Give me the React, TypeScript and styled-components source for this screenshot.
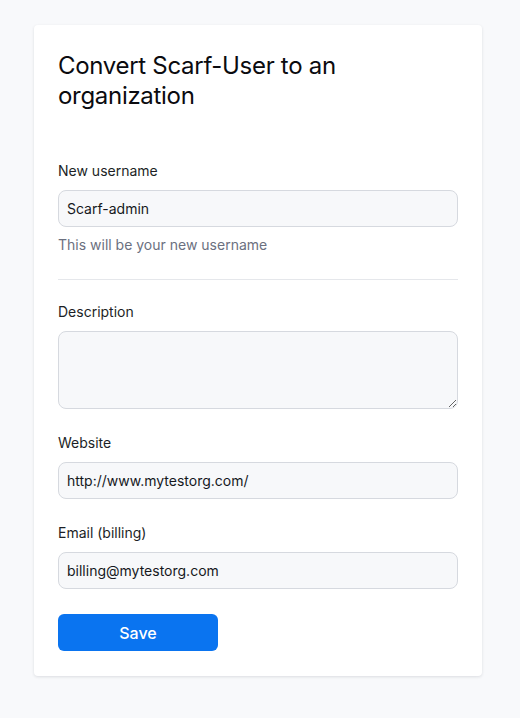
import React from "react";
import styled, {createGlobalStyle} from "styled-components";

const GlobalStyle = createGlobalStyle`
  html, body {
    margin: 0;
    padding: 0;
    background: #f8f9fb;
    font-family: Inter, "Noto Sans", sans-serif;
    color: #111827;
  }
  * {
    box-sizing: border-box;
  }
`;

const Page = styled.div`
  padding: 25px 38px 42px 34px;
`;

const Card = styled.div`
  background: #ffffff;
  border-radius: 4px;
  box-shadow: 0 1px 3px rgba(15, 23, 42, 0.12);
  padding: 26px 24px 25px 24px;
`;

const Title = styled.h1`
  margin: 0 0 50px;
  font-size: 24px;
  font-weight: 400;
  line-height: 30px;
  letter-spacing: -0.3px;
  color: #0b0b0f;
`;

const Field = styled.div<{$gap?: number}>`
  display: flex;
  flex-direction: column;
  margin-bottom: ${(p) => p.$gap ?? 24}px;
`;

const Label = styled.label`
  font-size: 14px;
  line-height: 20px;
  color: #1c1f26;
  margin-bottom: 9px;
`;

const Input = styled.input`
  height: 37px;
  width: 100%;
  padding: 0 8px;
  border: 1px solid #d6d9df;
  border-radius: 8px;
  background: #f7f8fa;
  font-family: inherit;
  font-size: 14px;
  color: #16181d;
  outline: none;
`;

const TextArea = styled.textarea`
  height: 78px;
  width: 100%;
  padding: 8px;
  border: 1px solid #d6d9df;
  border-radius: 8px;
  background: #f7f8fa;
  font-family: inherit;
  font-size: 14px;
  outline: none;
  display: block;
`;

const Hint = styled.div`
  margin-top: 8px;
  font-size: 14px;
  line-height: 20px;
  color: #6b7080;
`;

const Divider = styled.hr`
  border: none;
  border-top: 1px solid #e5e7eb;
  margin: 0 0 22px;
`;

const SaveButton = styled.button`
  width: 160px;
  height: 37px;
  border: none;
  border-radius: 6px;
  background: #0a74f0;
  color: #ffffff;
  font-family: inherit;
  font-size: 16px;
  font-weight: 500;
  cursor: pointer;
`;

export default function App() {
  return (
    <>
      <GlobalStyle />
      <Page>
        <Card>
          <Title>Convert Scarf-User to an organization</Title>
          <Field>
            <Label>New username</Label>
            <Input defaultValue="Scarf-admin" />
            <Hint>This will be your new username</Hint>
          </Field>
          <Divider />
          <Field>
            <Label>Description</Label>
            <TextArea />
          </Field>
          <Field>
            <Label>Website</Label>
            <Input defaultValue="http://www.mytestorg.com/" />
          </Field>
          <Field $gap={25}>
            <Label>Email (billing)</Label>
            <Input defaultValue="billing@mytestorg.com" />
          </Field>
          <SaveButton>Save</SaveButton>
        </Card>
      </Page>
    </>
  );
}
